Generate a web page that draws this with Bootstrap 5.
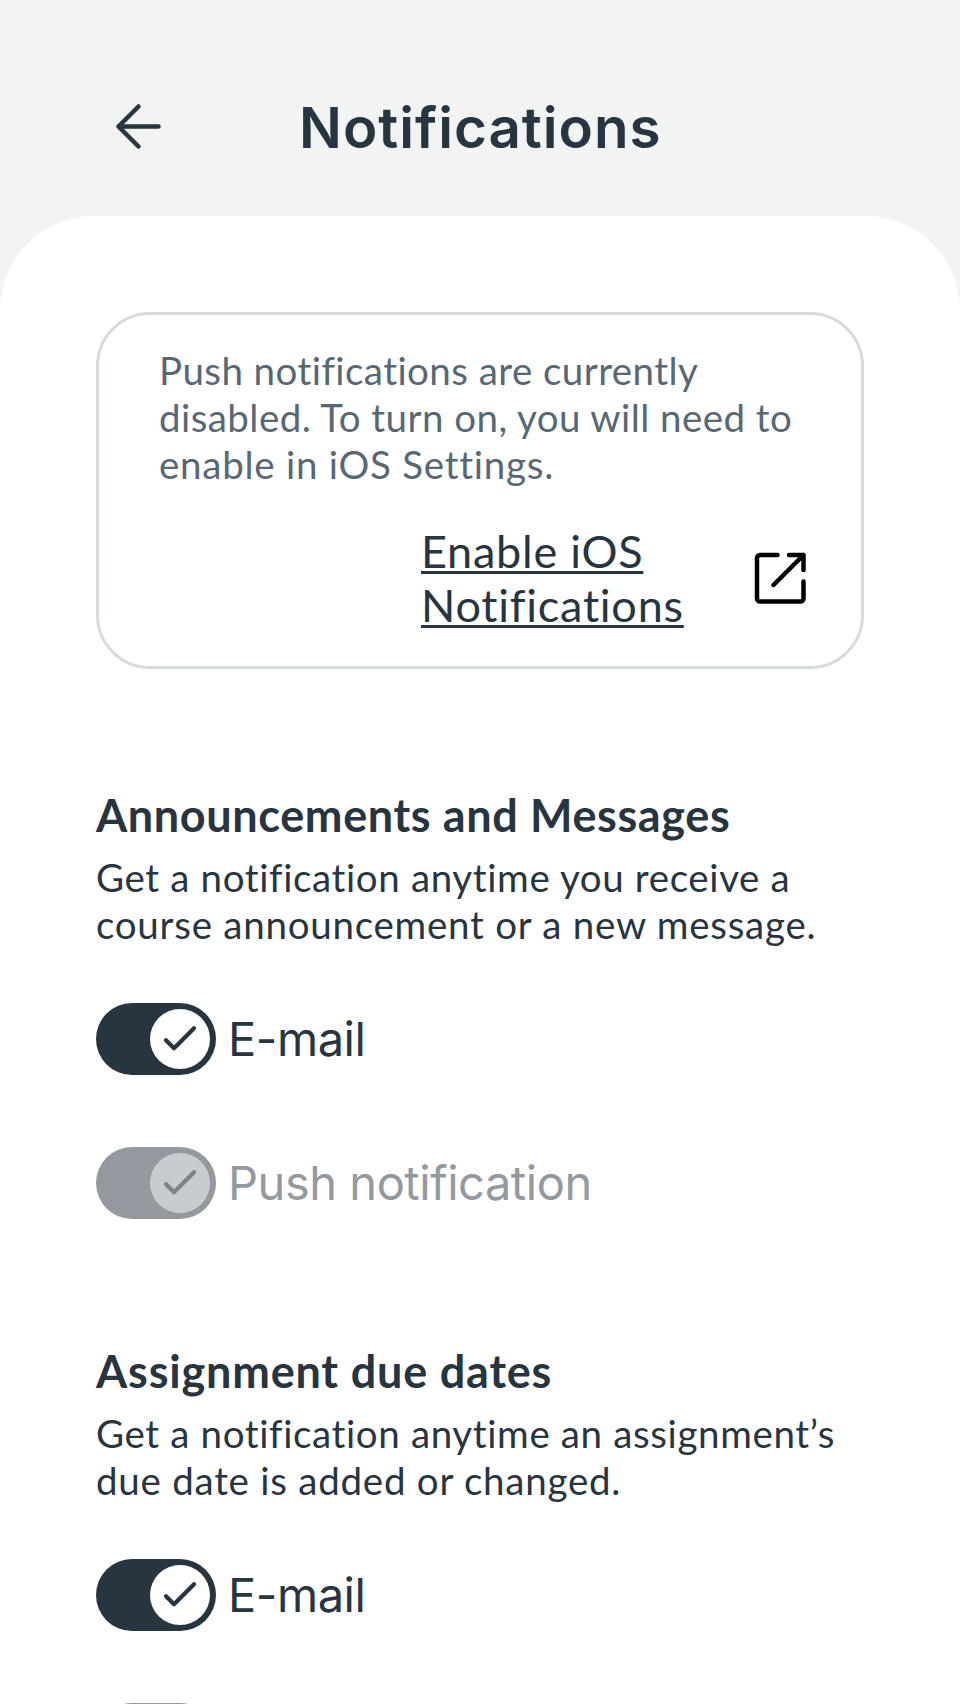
<!DOCTYPE html>
<html lang="en">
<head>
<meta charset="utf-8">
<meta name="viewport" content="width=device-width, initial-scale=1">
<title>Notifications</title>
<link href="https://cdn.jsdelivr.net/npm/bootstrap@5.3.0/dist/css/bootstrap.min.css" rel="stylesheet">
<style>
  :root { --ink: #273540; --muted-ink: #576874; --line: #d7dadf; --off: #93999f; }
  body { background: #f2f4f3; color: var(--ink); font-family: Lato, "Liberation Sans", sans-serif; }
  .screen { width: 960px; height: 1704px; }
  .topbar { height: 216px; padding: 37px 110px 0; display: grid; grid-template-columns: 189px 1fr; }
  .back-link { color: inherit; }
  .screen-title { font: 600 56.5px/1.2 Inter, sans-serif; letter-spacing: .98px; padding-top: 2px; }
  .sheet { border-radius: 94px 94px 0 0; padding: 96px 96px 0; }
  .notice { border: 3px solid var(--line); border-radius: 54px; padding: 32px 50.5px 34px 60px; height: 357px; }
  .copy { font-size: 38.5px; line-height: 47px; letter-spacing: .63px; }
  .notice .copy { color: var(--muted-ink); letter-spacing: .44px; }
  .copy .wide { letter-spacing: .75px; }
  .enable-link { width: 270px; font-size: 45px; line-height: 54px; letter-spacing: .76px; color: var(--ink);
    text-decoration-thickness: 3px; text-underline-offset: 3px; text-decoration-skip-ink: none; }
  .enable-link:hover { color: var(--ink); }
  .enable-row { margin-top: 36px; gap: 59.5px; }
  .group-title { font-size: 45px; line-height: 54px; font-weight: 700; letter-spacing: .62px; margin: 0 0 12px; }
  .group { padding-top: 124.6px; }
  .group + .group .group-title { letter-spacing: .8px; }
  .group:first-of-type { padding-top: 118.6px; }
  .switches { margin-top: 55.4px; gap: 72px; }
  .switch-row { height: 72px; gap: 12px; font: 400 47px/72px Inter, sans-serif; letter-spacing: -.46px; }
  .switch-row.is-off { color: var(--off); }
  .track { width: 120px; height: 72px; padding-right: 6px; background: var(--ink); }
  .knob { width: 60px; height: 60px; background: #fff; }
  .is-off .track { background: var(--off); }
  .is-off .knob { background: #c9ccce; color: #7b8389; }
</style>
</head>
<body>
<div class="screen overflow-hidden d-flex flex-column">
  <header class="topbar align-items-center flex-shrink-0">
    <a href="#" class="back-link d-block" aria-label="Back">
      <svg class="d-block" width="56" height="56" viewBox="0 0 56 56" fill="none" stroke="currentColor" stroke-width="4.5" stroke-linecap="round" stroke-linejoin="round"><path d="M48.5 27.500H8.500M28.500 7.500l-20 20 20 20"/></svg>
    </a>
    <h1 class="screen-title mb-0">Notifications</h1>
  </header>

  <main class="sheet bg-white flex-grow-1">
    <div class="notice">
      <p class="copy mb-0 text-nowrap">Push notifications are currently<br>disabled. To turn on, you will need to<br><span class="wide">enable in iOS Settings.</span></p>
      <div class="enable-row d-flex justify-content-end align-items-center">
        <a href="#" class="enable-link">Enable iOS Notifications</a>
        <svg width="60" height="60" viewBox="0 0 60 60" fill="none" stroke="#000" stroke-width="4.5" stroke-linecap="round" stroke-linejoin="round"><path d="M26.500 7H9a3 3 0 0 0-3 3v40.500a3 3 0 0 0 3 3h40.500a3 3 0 0 0 3-3V33.500M38 7h14.500v15M52.500 7 22.500 37"/></svg>
      </div>
    </div>

    <section class="group">
      <h2 class="group-title">Announcements and Messages</h2>
      <p class="copy mb-0 text-nowrap">Get a notification anytime you receive a<br><span class="wide">course announcement or a new message.</span></p>
      <div class="switches d-flex flex-column">
        <div class="switch-row d-flex align-items-center">
          <span class="track rounded-pill d-flex align-items-center justify-content-end"><span class="knob rounded-circle"><svg class="d-block" width="60" height="60" viewBox="0 0 60 60" fill="none" stroke="currentColor" stroke-width="4.2" stroke-linecap="round" stroke-linejoin="round"><path d="M16 31.300l8 7.900L44 19.300"/></svg></span></span>
          <span>E-mail</span>
        </div>
        <div class="switch-row is-off d-flex align-items-center">
          <span class="track rounded-pill d-flex align-items-center justify-content-end"><span class="knob rounded-circle"><svg class="d-block" width="60" height="60" viewBox="0 0 60 60" fill="none" stroke="currentColor" stroke-width="4.2" stroke-linecap="round" stroke-linejoin="round"><path d="M16 31.300l8 7.900L44 19.300"/></svg></span></span>
          <span>Push notification</span>
        </div>
      </div>
    </section>

    <section class="group">
      <h2 class="group-title">Assignment due dates</h2>
      <p class="copy mb-0 text-nowrap">Get a notification anytime an assignment’s<br><span class="wide">due date is added or changed.</span></p>
      <div class="switches d-flex flex-column">
        <div class="switch-row d-flex align-items-center">
          <span class="track rounded-pill d-flex align-items-center justify-content-end"><span class="knob rounded-circle"><svg class="d-block" width="60" height="60" viewBox="0 0 60 60" fill="none" stroke="currentColor" stroke-width="4.2" stroke-linecap="round" stroke-linejoin="round"><path d="M16 31.300l8 7.900L44 19.300"/></svg></span></span>
          <span>E-mail</span>
        </div>
        <div class="switch-row is-off d-flex align-items-center">
          <span class="track rounded-pill"></span>
        </div>
      </div>
    </section>
  </main>
</div>
<script src="https://cdn.jsdelivr.net/npm/bootstrap@5.3.0/dist/js/bootstrap.bundle.min.js"></script>
</body>
</html>
